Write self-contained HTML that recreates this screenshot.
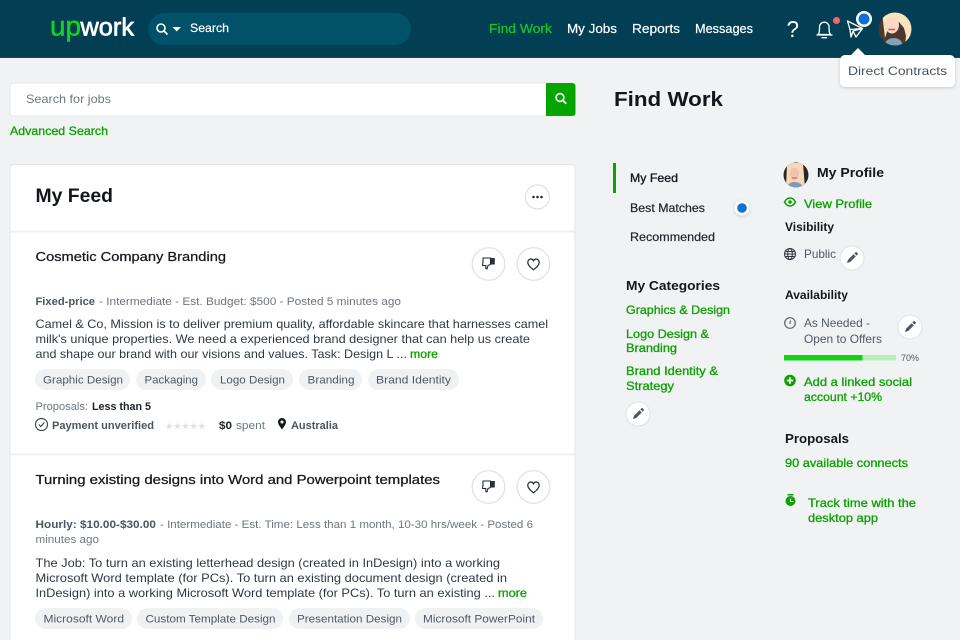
<!DOCTYPE html>
<html lang="en"><head><meta charset="utf-8"><title>Find Work</title>
<style>
html,body{margin:0;padding:0;width:960px;height:640px;overflow:hidden;background:#f1f2f4}
svg{display:block}
text{font-family:"Liberation Sans",sans-serif;font-size:12px;fill:#2c3640;white-space:pre}
.nav{font-size:12.5px;fill:#fff;stroke:#fff;stroke-width:.2px}
.g{fill:#0ba100;stroke:#0ba100;stroke-width:.3px}
.h{font-weight:bold;fill:#13171c}
.t{font-size:13px;fill:#15191e;stroke:#15191e;stroke-width:.25px}
.meta{font-size:11.2px;fill:#6d7680}
.b{font-weight:bold;fill:#4c5660}
.d{font-size:11.6px;fill:#2f3842}
.tag{font-size:11.2px;fill:#4f5963}
.s{font-size:11.6px;fill:#1f252b;stroke:#1f252b;stroke-width:.2px}
.x{font-size:11.6px;fill:#4f5963}
</style></head><body>
<svg width="960" height="640" viewBox="0 0 960 640" xmlns="http://www.w3.org/2000/svg">
<defs>
<clipPath id="a1"><circle cx="895" cy="29" r="16.5"/></clipPath>
<clipPath id="a2"><circle cx="796" cy="175" r="12.5"/></clipPath>
<filter id="sh" x="-20%" y="-20%" width="140%" height="150%"><feDropShadow dx="0" dy="1" stdDeviation="1.5" flood-color="#000" flood-opacity=".18"/></filter>
<g id="pen"><path d="M-5 5l1-3.2 5.6-5.6 2.2 2.2-5.6 5.6z M2.400-4.600l1-1a.9.9 0 0 1 1.300 0l.9.9a.9.9 0 0 1 0 1.300l-1 1z" fill="#4f5560"/></g>
<g id="thumb"><path d="M-6-5h7.500v6.500l-2.500 1-1 3.500-1.200-.5v-3h-3.300l.5-3.500z" fill="none" stroke="#222a33" stroke-width="1.100" stroke-linejoin="round"/><rect x="2" y="-5" width="3.800" height="6.500" fill="#2a323b"/></g>
<path id="heart" d="M0 5.800C-3 3.400-5.700 1.200-5.700-1.700-5.700-3.800-4.100-5-2.600-5-1.400-5-.5-4.300 0-3.300.5-4.300 1.400-5 2.600-5 4.100-5 5.700-3.800 5.700-1.700 5.700 1.200 3 3.400 0 5.800Z" fill="none" stroke="#222a33" stroke-width="1.200"/>
</defs>

<!-- header -->
<rect width="960" height="58" fill="#023f54"/>
<rect y="57" width="960" height="1" fill="#0a4a5e"/>
<text x="50" y="35.500" textLength="31" lengthAdjust="spacingAndGlyphs" style="font-size:28px;fill:#14d21d;stroke:#14d21d;stroke-width:.5px">up</text>
<text x="80.500" y="35.500" textLength="53.500" lengthAdjust="spacingAndGlyphs" style="font-size:25px;fill:#fff;stroke:#fff;stroke-width:.7px">work</text>
<rect x="148" y="13" width="263" height="32" rx="16" fill="#015168"/>
<circle cx="161" cy="28" r="4" fill="none" stroke="#fff" stroke-width="1.600"/><path d="M164 31l3.500 3.500" stroke="#fff" stroke-width="1.800"/>
<path d="M172.500 27h8.500l-4.250 4.500z" fill="#fff"/>
<text x="190" y="32" class="nav" textLength="39" lengthAdjust="spacingAndGlyphs" style="font-size:11.600px">Search</text>
<text x="489" y="33" class="nav" textLength="63" lengthAdjust="spacingAndGlyphs" style="fill:#16c92a;stroke:#16c92a">Find Work</text>
<text x="567" y="33" class="nav" textLength="50" lengthAdjust="spacingAndGlyphs">My Jobs</text>
<text x="632" y="33" class="nav" textLength="48" lengthAdjust="spacingAndGlyphs">Reports</text>
<text x="695" y="33" class="nav" textLength="58" lengthAdjust="spacingAndGlyphs">Messages</text>
<text x="786.500" y="37" textLength="12.500" lengthAdjust="spacingAndGlyphs" style="font-size:23px;fill:#fff">?</text>
<path d="M818 34.500c1.500-1.500 1.500-3.500 1.500-7.500a4.800 4.800 0 0 1 9.600 0c0 4 0 6 1.500 7.500z" fill="none" stroke="#fff" stroke-width="1.300" stroke-linejoin="round"/><path d="M816.500 35h16M821.500 37.700h5.500" stroke="#fff" stroke-width="1.300"/>
<circle cx="836.500" cy="20.500" r="3.500" fill="#f36b62"/>
<circle cx="864" cy="19" r="8" fill="#fff"/><circle cx="864" cy="19" r="5.500" fill="#0d70d8"/>
<path d="M847.500 21l15 7.500-6.500 8.500-3-6-2 6-1-7.500zM850 29.500l12.500-1M853 31l9.500-2.500" fill="none" stroke="#fff" stroke-width="1.300" stroke-linejoin="round"/>
<g clip-path="url(#a1)"><rect x="878" y="12" width="34" height="34" fill="#4d382c"/><path d="M882 12h30v34h-7l1-10-2-8-5-6-9 1-3 9-2 6z" fill="#f7e4bd"/><ellipse cx="892" cy="25" rx="7" ry="8.500" fill="#f7d9c6"/><path d="M888.500 29.500h6.500" stroke="#dd4d58" stroke-width="1.600"/><path d="M884 46c1-6 6-8 10-8s8 2 9 8z" fill="#83a0b4"/></g>

<!-- tooltip -->
<path d="M858 48l8 8h-16z" fill="#fff"/>
<rect x="840" y="55" width="115" height="32" rx="5" fill="#fff" filter="url(#sh)"/>
<text x="848" y="75" textLength="99" lengthAdjust="spacingAndGlyphs" style="font-size:12px;fill:#49525c">Direct Contracts</text>

<!-- search -->
<rect x="10" y="83" width="537" height="33" rx="3" fill="#fff" stroke="#e8e9eb"/>
<path d="M546 83h26.500a3 3 0 0 1 3 3v27a3 3 0 0 1-3 3H546z" fill="#05a500"/>
<circle cx="560" cy="97.500" r="3.900" fill="none" stroke="#fff" stroke-width="1.600"/><path d="M563 100.500l3.200 3.200" stroke="#fff" stroke-width="1.800"/>
<text x="26" y="103" textLength="85" lengthAdjust="spacingAndGlyphs" style="fill:#6f7780">Search for jobs</text>
<text x="10" y="135" class="g" textLength="98" lengthAdjust="spacingAndGlyphs">Advanced Search</text>
<text x="614" y="106" class="h" textLength="109" lengthAdjust="spacingAndGlyphs" style="font-size:20.500px">Find Work</text>

<!-- card -->
<rect x="10" y="164.500" width="565" height="490" rx="4" fill="#fff" stroke="#e5e6e9"/>
<rect x="10.500" y="230.500" width="564" height="2" fill="#eff0f2"/>
<rect x="10.500" y="453.500" width="564" height="2" fill="#eff0f2"/>
<text x="35.500" y="202" class="h" textLength="77.500" lengthAdjust="spacingAndGlyphs" style="font-size:19px">My Feed</text>
<circle cx="537.500" cy="197" r="12" fill="#fff" stroke="#dfe0e3" stroke-width="1.200"/>
<circle cx="533.500" cy="197" r="1.300" fill="#2a3039"/><circle cx="537.500" cy="197" r="1.300" fill="#2a3039"/><circle cx="541.500" cy="197" r="1.300" fill="#2a3039"/>

<!-- job 1 -->
<text x="35.500" y="261" class="t" textLength="190.500" lengthAdjust="spacingAndGlyphs">Cosmetic Company Branding</text>
<circle cx="488.500" cy="264" r="16.300" fill="#fff" stroke="#dfe0e3" stroke-width="1.200"/><use href="#thumb" x="489" y="263"/>
<circle cx="533.500" cy="264" r="16.300" fill="#fff" stroke="#dfe0e3" stroke-width="1.200"/><use href="#heart" x="533.500" y="264"/>
<text x="35.500" y="305" class="meta b" textLength="59.500" lengthAdjust="spacingAndGlyphs">Fixed-price</text>
<text x="99" y="305" class="meta" textLength="302" lengthAdjust="spacingAndGlyphs">- Intermediate - Est. Budget: $500 - Posted 5 minutes ago</text>
<text x="35.500" y="328" class="d" textLength="512.500" lengthAdjust="spacingAndGlyphs">Camel &amp; Co, Mission is to deliver premium quality, affordable skincare that harnesses camel</text>
<text x="35.500" y="343" class="d" textLength="494.500" lengthAdjust="spacingAndGlyphs">milk's unique properties. We need a experienced brand designer that can help us create</text>
<text x="35.500" y="358" class="d" textLength="371.500" lengthAdjust="spacingAndGlyphs">and shape our brand with our visions and values. Task: Design L ...</text>
<text x="410" y="358" class="g" textLength="28" lengthAdjust="spacingAndGlyphs">more</text>
<g fill="#f0f1f3">
<rect x="35" y="369" width="95" height="21" rx="10.500"/><rect x="136" y="369" width="70" height="21" rx="10.500"/><rect x="211" y="369" width="82" height="21" rx="10.500"/><rect x="299" y="369" width="63" height="21" rx="10.500"/><rect x="368" y="369" width="91" height="21" rx="10.500"/>
</g>
<text x="43" y="383.500" class="tag" textLength="80" lengthAdjust="spacingAndGlyphs">Graphic Design</text>
<text x="144.500" y="383.500" class="tag" textLength="53.500" lengthAdjust="spacingAndGlyphs">Packaging</text>
<text x="220" y="383.500" class="tag" textLength="65" lengthAdjust="spacingAndGlyphs">Logo Design</text>
<text x="307.500" y="383.500" class="tag" textLength="47" lengthAdjust="spacingAndGlyphs">Branding</text>
<text x="376" y="383.500" class="tag" textLength="75" lengthAdjust="spacingAndGlyphs">Brand Identity</text>
<text x="35.500" y="410" class="meta" textLength="52.500" lengthAdjust="spacingAndGlyphs">Proposals:</text>
<text x="92" y="410" style="font-size:11.200px;font-weight:bold;fill:#1c2228" textLength="59" lengthAdjust="spacingAndGlyphs">Less than 5</text>
<circle cx="41.500" cy="424.500" r="6" fill="none" stroke="#3d4650" stroke-width="1.200"/><path d="M38.800 424.500l2 2 3.500-4" fill="none" stroke="#3d4650" stroke-width="1.200"/>
<text x="52" y="429" class="meta b" textLength="102" lengthAdjust="spacingAndGlyphs">Payment unverified</text>
<text x="165" y="429" textLength="41" lengthAdjust="spacingAndGlyphs" style="font-size:9px;fill:#dcdee1;font-family:'DejaVu Sans',sans-serif">★★★★★</text>
<text x="219" y="429" style="font-size:11.200px;font-weight:bold;fill:#1c2228" textLength="13" lengthAdjust="spacingAndGlyphs">$0</text>
<text x="236" y="429" class="meta" textLength="29" lengthAdjust="spacingAndGlyphs">spent</text>
<path d="M282 429.500c-2.500-3.500-4-5.500-4-7.500a4 4 0 0 1 8 0c0 2-1.500 4-4 7.500z" fill="#14191e"/><circle cx="282" cy="422" r="1.500" fill="#fff"/>
<text x="291" y="429" class="meta b" textLength="47" lengthAdjust="spacingAndGlyphs">Australia</text>

<!-- job 2 -->
<text x="35.500" y="484" class="t" textLength="404.500" lengthAdjust="spacingAndGlyphs">Turning existing designs into Word and Powerpoint templates</text>
<circle cx="488.500" cy="487" r="16.300" fill="#fff" stroke="#dfe0e3" stroke-width="1.200"/><use href="#thumb" x="489" y="486"/>
<circle cx="533.500" cy="487" r="16.300" fill="#fff" stroke="#dfe0e3" stroke-width="1.200"/><use href="#heart" x="533.500" y="487"/>
<text x="35.500" y="528" class="meta b" textLength="120.500" lengthAdjust="spacingAndGlyphs">Hourly: $10.00-$30.00</text>
<text x="160" y="528" class="meta" textLength="373" lengthAdjust="spacingAndGlyphs">- Intermediate - Est. Time: Less than 1 month, 10-30 hrs/week - Posted 6</text>
<text x="35.500" y="543" class="meta" textLength="63.500" lengthAdjust="spacingAndGlyphs">minutes ago</text>
<text x="35.500" y="567" class="d" textLength="464.500" lengthAdjust="spacingAndGlyphs">The Job: To turn an existing letterhead design (created in InDesign) into a working</text>
<text x="35.500" y="582" class="d" textLength="471.500" lengthAdjust="spacingAndGlyphs">Microsoft Word template (for PCs). To turn an existing document design (created in</text>
<text x="35.500" y="597" class="d" textLength="459.500" lengthAdjust="spacingAndGlyphs">InDesign) into a working Microsoft Word template (for PCs). To turn an existing ...</text>
<text x="498" y="597" class="g" textLength="29" lengthAdjust="spacingAndGlyphs">more</text>
<g fill="#f0f1f3">
<rect x="35" y="608" width="97" height="21" rx="10.500"/><rect x="137" y="608" width="146" height="21" rx="10.500"/><rect x="289" y="608" width="121" height="21" rx="10.500"/><rect x="415" y="608" width="128" height="21" rx="10.500"/>
</g>
<text x="43.500" y="622.500" class="tag" textLength="80.500" lengthAdjust="spacingAndGlyphs">Microsoft Word</text>
<text x="145.500" y="622.500" class="tag" textLength="130" lengthAdjust="spacingAndGlyphs">Custom Template Design</text>
<text x="297" y="622.500" class="tag" textLength="105" lengthAdjust="spacingAndGlyphs">Presentation Design</text>
<text x="423" y="622.500" class="tag" textLength="112" lengthAdjust="spacingAndGlyphs">Microsoft PowerPoint</text>

<!-- left side nav -->
<rect x="613" y="163" width="3" height="30" fill="#0ba100"/>
<text x="630" y="182" class="s" textLength="48" lengthAdjust="spacingAndGlyphs" style="stroke-width:.35px;fill:#13171c">My Feed</text>
<text x="630" y="212" class="s" textLength="75" lengthAdjust="spacingAndGlyphs">Best Matches</text>
<text x="630" y="241" class="s" textLength="85" lengthAdjust="spacingAndGlyphs">Recommended</text>
<circle cx="742" cy="208" r="7.500" fill="#fff" filter="url(#sh)"/><circle cx="742" cy="208" r="4.800" fill="#0d70d8"/>
<text x="626" y="290" class="h" textLength="94" lengthAdjust="spacingAndGlyphs" style="font-size:13px">My Categories</text>
<text x="626" y="314" class="g" textLength="104" lengthAdjust="spacingAndGlyphs">Graphics &amp; Design</text>
<text x="626" y="338" class="g" textLength="83" lengthAdjust="spacingAndGlyphs">Logo Design &amp;</text>
<text x="626" y="352" class="g" textLength="51" lengthAdjust="spacingAndGlyphs">Branding</text>
<text x="626" y="375" class="g" textLength="92" lengthAdjust="spacingAndGlyphs">Brand Identity &amp;</text>
<text x="626" y="390" class="g" textLength="48" lengthAdjust="spacingAndGlyphs">Strategy</text>
<circle cx="638" cy="414" r="12" fill="#fff" stroke="#dfe0e3"/><use href="#pen" x="638" y="414"/>

<!-- profile -->
<g clip-path="url(#a2)"><rect x="783" y="162" width="26" height="26" fill="#2a2320"/><path d="M787 163h16l2 25h-19z" fill="#f3d9b8"/><ellipse cx="794.500" cy="174" rx="4.500" ry="6.500" fill="#efc4ae"/><path d="M792 178h5" stroke="#d9505a" stroke-width="1"/><path d="M787 188c1-5 4-6 8-6s7 2 8 6z" fill="#7d9cb4"/></g>
<text x="817" y="177" class="h" textLength="67" lengthAdjust="spacingAndGlyphs" style="font-size:13px">My Profile</text>
<path d="M784.500 202c1.500-2.800 3.500-4 5.500-4s4 1.200 5.500 4c-1.500 2.800-3.500 4-5.500 4s-4-1.200-5.500-4z" fill="none" stroke="#0ba100" stroke-width="1.500"/><circle cx="790" cy="202" r="1.800" fill="#0ba100"/>
<text x="804" y="208" class="g" textLength="68" lengthAdjust="spacingAndGlyphs">View Profile</text>
<text x="785" y="231" class="h" textLength="49" lengthAdjust="spacingAndGlyphs" style="font-size:12px">Visibility</text>
<g fill="none" stroke="#2f3640" stroke-width="1"><circle cx="790" cy="254" r="5.500"/><ellipse cx="790" cy="254" rx="2.300" ry="5.500"/><path d="M784.500 254h11M785.300 251.500h9.400M785.300 256.500h9.400"/></g>
<text x="804" y="258" class="x" textLength="32" lengthAdjust="spacingAndGlyphs">Public</text>
<circle cx="852" cy="258" r="12" fill="#fff" stroke="#e2e3e5"/><use href="#pen" x="852" y="258"/>
<text x="785" y="299" class="h" textLength="63" lengthAdjust="spacingAndGlyphs" style="font-size:12px">Availability</text>
<circle cx="790" cy="323" r="5.300" fill="none" stroke="#5a626c" stroke-width="1.200"/><path d="M790.500 320.500l-.6 3.500" stroke="#5a626c" stroke-width="1.100"/>
<text x="804" y="327" class="x" textLength="66" lengthAdjust="spacingAndGlyphs">As Needed -</text>
<text x="804" y="343" class="x" textLength="78" lengthAdjust="spacingAndGlyphs">Open to Offers</text>
<circle cx="910" cy="327" r="12" fill="#fff" stroke="#e2e3e5"/><use href="#pen" x="910" y="327"/>
<rect x="784" y="355" width="112" height="5.500" fill="#b6f2b6"/><rect x="784" y="355" width="78.500" height="5.500" fill="#12d312"/>
<text x="901" y="361" textLength="18" lengthAdjust="spacingAndGlyphs" style="font-size:9.500px;fill:#4f5963">70%</text>
<circle cx="790" cy="380.500" r="5.800" fill="#0ba100"/><path d="M786.800 380.500h6.400M790 377.300v6.400" stroke="#fff" stroke-width="1.700"/>
<text x="804" y="386" class="g" textLength="108" lengthAdjust="spacingAndGlyphs">Add a linked social</text>
<text x="804" y="401" class="g" textLength="78" lengthAdjust="spacingAndGlyphs">account +10%</text>
<text x="785" y="443" class="h" textLength="64" lengthAdjust="spacingAndGlyphs" style="font-size:13px">Proposals</text>
<text x="785" y="467" class="g" textLength="123" lengthAdjust="spacingAndGlyphs">90 available connects</text>
<circle cx="790.500" cy="501" r="5" fill="#0ba100"/><rect x="787.500" y="494" width="6" height="1.500" fill="#0ba100"/><path d="M790.500 498.500v3h2.800" fill="none" stroke="#fff" stroke-width="1.100"/>
<text x="808" y="507" class="g" textLength="108" lengthAdjust="spacingAndGlyphs">Track time with the</text>
<text x="808" y="522" class="g" textLength="70" lengthAdjust="spacingAndGlyphs">desktop app</text>
</svg>
</body></html>
